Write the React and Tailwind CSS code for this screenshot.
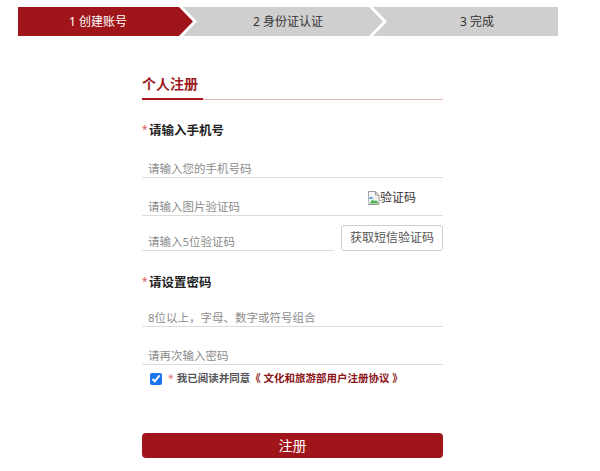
import React from "react";

// Step bar across the top
function Steps() {
  return (
    <div className="mt-[7px] ml-[18px] flex h-[29px] text-[12px] leading-[29px]">
      <div className="w-[175px] pr-[15px] text-center bg-[#a0151a] text-white [clip-path:polygon(0_0,calc(100%_-_14px)_0,100%_50%,calc(100%_-_14px)_100%,0_100%)]">
        1 创建账号
      </div>
      <div className="-ml-[10px] w-[200px] pl-[10px] text-center bg-[#cfcfcf] text-[#333] [clip-path:polygon(0_0,calc(100%_-_14px)_0,100%_50%,calc(100%_-_14px)_100%,0_100%,14px_50%)]">
        2 身份证认证
      </div>
      <div className="-ml-[10px] w-[185px] pl-[23px] text-center bg-[#cfcfcf] text-[#333] [clip-path:polygon(0_0,100%_0,100%_100%,0_100%,14px_50%)]">
        3 完成
      </div>
    </div>
  );
}

// Label with red asterisk
function Label({ children, className }) {
  return (
    <div className={"flex items-center h-[20px] " + className}>
      <span className="w-[7px] text-[10px] text-[#d0585c] -mt-[3px]">*</span>
      <span className="text-[12.5px] font-bold text-[#222]">{children}</span>
    </div>
  );
}

function Field({ placeholder, type = "text" }) {
  return (
    <input
      type={type}
      placeholder={placeholder}
      className="block h-[16px] w-full min-w-0 pl-[6px] bg-transparent outline-none text-[11.5px] leading-[16px] text-[#333] placeholder:text-[#8c8c8c]"
    />
  );
}

// Small broken image glyph shown in place of the captcha image
function BrokenImage() {
  return (
    <svg width="12" height="14" viewBox="0 0 12 14" className="mt-[1px]">
      <path d="M0.5 0.5h7l3.5 3.5v9.5h-11z" fill="#f4f4f4" stroke="#9a9a9a" />
      <path d="M7.5 0.5v3.5h3.5" fill="none" stroke="#9a9a9a" />
      <path d="M1.5 12.5l3-4 2 2 1.5-1.5 2.5 3.5z" fill="#4caf50" />
      <rect x="1.5" y="6" width="3" height="2" fill="#5b9bd5" />
    </svg>
  );
}

export default function App() {
  return (
    <div className="bg-white min-h-[471px] font-['Noto_Sans','Noto_Sans_CJK_SC',sans-serif]">
      <Steps />

      <div className="ml-[142px] w-[301px]">
        {/* Title with underline */}
        <div className="mt-[38px] flex border-b border-[#e6b3b3]">
          <div className="-mb-px w-[61px] pb-[4px] border-b-2 border-[#a8161b] text-[14px] leading-[20px] font-bold text-[#9b1b1e]">
            个人注册
          </div>
        </div>

        <Label className="mt-[21px]">请输入手机号</Label>

        <div className="pt-[20px] border-b border-[#dcdcdc]">
          <Field placeholder="请输入您的手机号码" />
        </div>

        <div className="pt-[12px] flex items-end border-b border-[#dcdcdc]">
          <Field placeholder="请输入图片验证码" />
          <div className="w-[75px] h-[25px] shrink-0 flex items-start text-[12px] leading-[16px] text-[#333]">
            <BrokenImage />
            <span>验证码</span>
          </div>
        </div>

        <div className="mt-[9px] flex items-end gap-[7px]">
          <div className="w-[192px] border-b border-[#dcdcdc]">
            <Field placeholder="请输入5位验证码" />
          </div>
          <button className="w-[102px] h-[26px] rounded-[3px] border border-[#cfcfcf] bg-white text-[12px] text-[#555]">
            获取短信验证码
          </button>
        </div>

        <Label className="mt-[22px]">请设置密码</Label>

        <div className="pt-[17px] border-b border-[#dcdcdc]">
          <Field type="password" placeholder="8位以上，字母、数字或符号组合" />
        </div>

        <div className="pt-[21px] border-b border-[#dcdcdc]">
          <Field type="password" placeholder="请再次输入密码" />
        </div>

        <div className="mt-[6px] h-[16px] flex items-center text-[10.5px]">
          <input type="checkbox" defaultChecked className="ml-[8px] w-[12px] h-[12px] accent-[#1a73e8]" />
          <span className="ml-[6px] text-[#d77] mr-[3px]">*</span>
          <span className="font-semibold text-[#555]">我已阅读并同意</span>
          <span className="font-bold text-[#8b1518]">《 文化和旅游部用户注册协议 》</span>
        </div>

        <button className="mt-[46px] block w-full h-[25px] rounded-[4px] bg-[#a0151a] text-white text-[14px] leading-[25px]">
          注册
        </button>
      </div>
    </div>
  );
}
